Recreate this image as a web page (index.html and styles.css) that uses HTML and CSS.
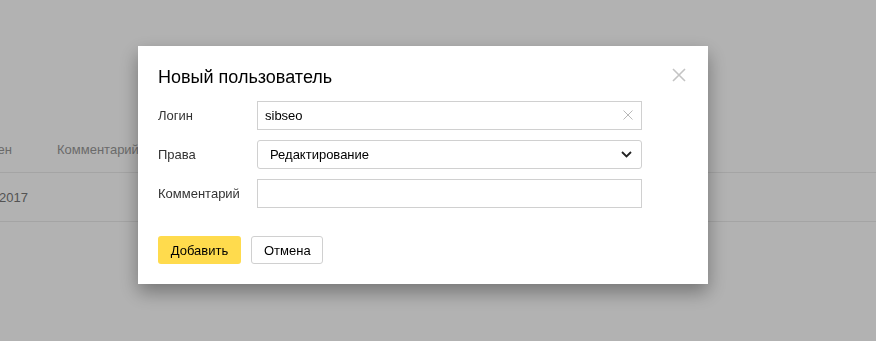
FILE: index.html
```html
<!DOCTYPE html>
<html>
<head>
    <title>Новый пользователь</title>
    <link rel="stylesheet" href="styles.css">
</head>
<body>
    <!-- page under the modal -->
    <div class="page">
        <div class="table-row table-head">
            <div class="cell cell-date">Добавлен</div>
            <div class="cell cell-comment">Комментарий</div>
        </div>
        <div class="table-row">
            <div class="cell cell-date">11.05.2017</div>
            <div class="cell cell-comment"></div>
        </div>
    </div>

    <div class="overlay">
        <div class="dialog">
            <button class="dialog-close" aria-label="Закрыть">
                <svg width="14" height="14" viewBox="0 0 14 14">
                    <path d="M1 1L13 13M13 1L1 13" stroke="#c4c4c4" stroke-width="1.6" fill="none"/>
                </svg>
            </button>
            <h2 class="dialog-title">Новый пользователь</h2>

            <div class="form">
                <label class="form-label" for="login">Логин</label>
                <div class="field">
                    <input id="login" class="input" type="text" value="sibseo">
                    <span class="input-clear">
                        <svg width="10" height="10" viewBox="0 0 10 10">
                            <path d="M0.5 0.5L9.5 9.5M9.5 0.5L0.5 9.5" stroke="#b8b8b8" stroke-width="1" fill="none"/>
                        </svg>
                    </span>
                </div>

                <label class="form-label" for="rights">Права</label>
                <div class="field">
                    <div id="rights" class="select">
                        <span>Редактирование</span>
                        <svg width="11" height="7" viewBox="0 0 11 7">
                            <path d="M1 1L5.5 5.5L10 1" stroke="#222" stroke-width="1.8" fill="none"/>
                        </svg>
                    </div>
                </div>

                <label class="form-label" for="comment">Комментарий</label>
                <div class="field">
                    <input id="comment" class="input" type="text">
                </div>
            </div>

            <div class="dialog-actions">
                <button class="btn btn-action">Добавить</button>
                <button class="btn btn-normal">Отмена</button>
            </div>
        </div>
    </div>
</body>
</html>
```

FILE: styles.css
```css
body {
    font-family: "Liberation Sans", Arial, sans-serif;
    margin: 0;
    background-color: #fff;
    color: #333;
    font-size: 13px;
}

.page {
    padding-top: 126px;
    color: #777;
}

.table-row {
    display: flex;
    height: 48px;
    align-items: center;
    border-bottom: 1px solid #ebebeb;
}

.table-head {
    color: #999;
    height: 46px;
}

.cell-date {
    width: 100px;
    margin-left: -72px;
    text-align: right;
}

.table-head .cell-date {
    margin-left: -88px;
}

.cell-comment {
    margin-left: 45px;
}

/* modal */
.overlay {
    position: fixed;
    top: 0;
    left: 0;
    right: 0;
    bottom: 0;
    background-color: rgba(0, 0, 0, 0.3);
}

.dialog {
    position: relative;
    margin: 46px 0 0 138px;
    width: 570px;
    box-sizing: border-box;
    padding: 19px 20px 20px;
    background-color: #fff;
    box-shadow: 0 8px 18px rgba(0, 0, 0, 0.35);
}

.dialog-close {
    position: absolute;
    top: 22px;
    right: 22px;
    padding: 0;
    border: 0;
    background: none;
    width: 14px;
    height: 14px;
}

.dialog-close svg {
    display: block;
}

.dialog-title {
    margin: 0 0 12px;
    font-size: 18px;
    line-height: 24px;
    font-weight: normal;
    color: #000;
}

.form {
    display: grid;
    grid-template-columns: 99px 385px;
    row-gap: 10px;
    align-items: center;
}

.form-label {
    color: #333;
}

.field {
    position: relative;
    height: 29px;
}

.input {
    box-sizing: border-box;
    width: 100%;
    height: 29px;
    margin: 0;
    padding: 0 28px 0 7px;
    border: 1px solid #d0d0d0;
    border-radius: 0;
    font-family: inherit;
    font-size: 13px;
    color: #000;
    outline: none;
}

.input-clear {
    position: absolute;
    right: 9px;
    top: 9px;
    line-height: 0;
}

.select {
    box-sizing: border-box;
    height: 29px;
    display: flex;
    align-items: center;
    justify-content: space-between;
    padding: 0 9px 0 12px;
    border: 1px solid #d0d0d0;
    border-radius: 3px;
    color: #000;
}

.dialog-actions {
    display: flex;
    gap: 10px;
    margin-top: 28px;
}

.btn {
    height: 28px;
    padding: 0 12px;
    border-radius: 3px;
    font-family: inherit;
    font-size: 13px;
    color: #000;
}

.btn-action {
    width: 83px;
    border: 0;
    background-color: #ffdb4d;
}

.btn-normal {
    width: 72px;
    border: 1px solid #d0d0d0;
    background-color: #fff;
}
```
